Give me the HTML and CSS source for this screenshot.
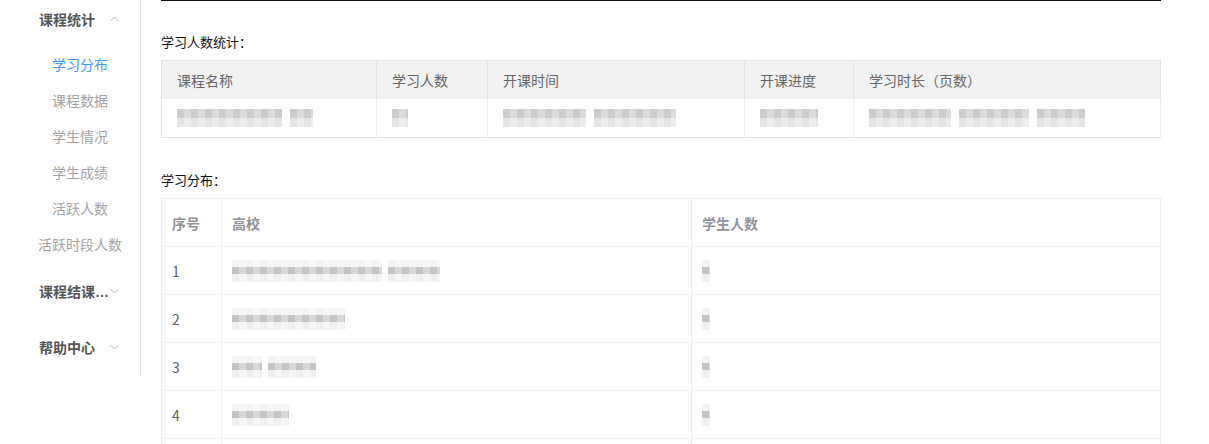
FILE: index.html
```html
<!DOCTYPE html>
<html lang="zh-CN">
<head>
    <meta charset="UTF-8">
    <meta name="viewport" content="width=device-width, initial-scale=1.0">
    <title>课程统计 - 学习分布</title>
    <link rel="stylesheet" href="styles.css">
</head>
<body>

    <div class="page">

        <!-- Menu lateral -->
        <aside class="sidebar">
            <div class="menu-group">
                <div class="menu-title">
                    <span class="title-text">课程统计</span>
                    <svg class="chevron" width="9" height="6" viewBox="0 0 9 6"><path d="M0.5 5 L4.5 1 L8.5 5" fill="none" stroke="#b5b5b5" stroke-width="1"/></svg>
                </div>
                <ul class="submenu">
                    <li class="active">学习分布</li>
                    <li>课程数据</li>
                    <li>学生情况</li>
                    <li>学生成绩</li>
                    <li>活跃人数</li>
                    <li>活跃时段人数</li>
                </ul>
            </div>
            <div class="menu-group">
                <div class="menu-title">
                    <span class="title-text">课程结课统计</span>
                    <svg class="chevron" width="9" height="6" viewBox="0 0 9 6"><path d="M0.5 1 L4.5 5 L8.5 1" fill="none" stroke="#b5b5b5" stroke-width="1"/></svg>
                </div>
            </div>
            <div class="menu-group">
                <div class="menu-title">
                    <span class="title-text">帮助中心</span>
                    <svg class="chevron" width="9" height="6" viewBox="0 0 9 6"><path d="M0.5 1 L4.5 5 L8.5 1" fill="none" stroke="#b5b5b5" stroke-width="1"/></svg>
                </div>
            </div>
        </aside>

        <!-- Conteudo -->
        <main class="content">
            <p class="section-label">学习人数统计：</p>
            <table class="stat-table">
                <thead>
                    <tr>
                        <th class="c-name">课程名称</th>
                        <th class="c-count">学习人数</th>
                        <th class="c-time">开课时间</th>
                        <th class="c-progress">开课进度</th>
                        <th>学习时长（页数）</th>
                    </tr>
                </thead>
                <tbody>
                    <tr>
                        <td><span class="blur" style="width:105px"></span><span class="blur gap" style="width:23px"></span></td>
                        <td><span class="blur" style="width:16px"></span></td>
                        <td><span class="blur" style="width:83px"></span><span class="blur gap" style="width:82px"></span></td>
                        <td><span class="blur" style="width:58px"></span></td>
                        <td><span class="blur" style="width:82px"></span><span class="blur gap" style="width:70px"></span><span class="blur gap" style="width:48px"></span></td>
                    </tr>
                </tbody>
            </table>

            <p class="section-label second">学习分布：</p>
            <table class="dist-table">
                <thead>
                    <tr>
                        <th class="c-index">序号</th>
                        <th class="c-school">高校</th>
                        <th>学生人数</th>
                    </tr>
                </thead>
                <tbody>
                    <tr>
                        <td>1</td>
                        <td><span class="blur-line" style="width:150px"></span><span class="blur-line gap" style="width:52px"></span></td>
                        <td><span class="blur-line" style="width:8px"></span></td>
                    </tr>
                    <tr>
                        <td>2</td>
                        <td><span class="blur-line" style="width:113px"></span></td>
                        <td><span class="blur-line" style="width:8px"></span></td>
                    </tr>
                    <tr>
                        <td>3</td>
                        <td><span class="blur-line" style="width:30px"></span><span class="blur-line gap" style="width:48px"></span></td>
                        <td><span class="blur-line" style="width:8px"></span></td>
                    </tr>
                    <tr>
                        <td>4</td>
                        <td><span class="blur-line" style="width:57px"></span></td>
                        <td><span class="blur-line" style="width:8px"></span></td>
                    </tr>
                    <tr>
                        <td></td>
                        <td></td>
                        <td></td>
                    </tr>
                </tbody>
            </table>
        </main>

    </div>

</body>
</html>
```

FILE: styles.css
```css
body {
    font-family: "Noto Sans CJK SC", "Noto Sans", sans-serif;
    margin: 0;
    padding: 0;
    background-color: #ffffff;
    color: #333;
}

.page {
    display: flex;
    align-items: flex-start;
}

/* Menu lateral */
.sidebar {
    width: 141px;
    height: 384px;
    margin-top: -9px;
    border-right: 1px solid #e6e6e6;
    box-sizing: border-box;
    flex-shrink: 0;
}

.menu-title {
    display: flex;
    align-items: center;
    height: 56px;
    padding-left: 39px;
}

.title-text {
    width: 70px;
    font-family: "Liberation Sans", "Noto Sans CJK SC", sans-serif;
    font-size: 14px;
    font-weight: bold;
    color: #555;
    white-space: nowrap;
    overflow: hidden;
    text-overflow: ellipsis;
}

.chevron {
    margin-left: 1px;
}

.submenu {
    list-style: none;
    margin: 0;
    padding: 0;
}

.submenu li {
    height: 36px;
    line-height: 35px;
    padding-left: 20px;
    text-align: center;
    font-size: 14px;
    color: #a3a3a3;
}

.submenu li.active {
    color: #3d9bf6;
}

/* Conteudo */
.content {
    margin-left: 20px;
    width: 1000px;
    border-top: 1px solid #111;
}

.section-label {
    margin: 32px 0 9px;
    font-size: 13px;
    line-height: 18px;
    color: #111;
}

.section-label.second {
    margin-top: 33px;
}

/* Tabela de estatisticas */
.stat-table {
    width: 100%;
    border-collapse: collapse;
    border: 1px solid #e2e2e2;
    font-size: 14px;
}

.stat-table th {
    height: 38px;
    padding: 0 15px;
    background-color: #f2f2f2;
    border-right: 1px solid #e4e4e4;
    text-align: left;
    font-weight: normal;
    color: #666;
}

.stat-table td {
    height: 38px;
    padding: 0 15px;
    border-right: 1px solid #eeeeee;
    font-size: 0;
}

.stat-table .c-name { width: 184px; }
.stat-table .c-count { width: 80px; }
.stat-table .c-time { width: 226px; }
.stat-table .c-progress { width: 78px; }

/* Mosaico dos dados ocultos */
.blur {
    display: inline-block;
    height: 18px;
    vertical-align: middle;
    background:
        repeating-linear-gradient(90deg, rgba(255, 255, 255, 0) 0 7px, rgba(255, 255, 255, 0.3) 7px 14px),
        linear-gradient(to bottom, #cdcbcb 0 50%, #e6e5e5 50% 100%);
}

.blur.gap {
    margin-left: 8px;
}

.blur-line {
    display: inline-block;
    height: 22px;
    vertical-align: middle;
    background:
        repeating-linear-gradient(90deg, rgba(255, 255, 255, 0) 0 7px, rgba(255, 255, 255, 0.35) 7px 14px),
        linear-gradient(to bottom, #f3f3f3 0 30%, #c4c4c6 30% 65%, #f0f0f0 65% 100%);
}

.blur-line.gap {
    margin-left: 6px;
}

/* Tabela de distribuicao */
.dist-table {
    width: 100%;
    border-collapse: collapse;
    font-size: 14px;
}

.dist-table th,
.dist-table td {
    height: 47px;
    padding: 0 10px;
    border: 1px solid #ebeef5;
    text-align: left;
}

.dist-table th {
    font-weight: bold;
    color: #909399;
}

.dist-table td {
    color: #606266;
}

.dist-table .c-index { width: 39px; }
.dist-table .c-school { width: 449px; }
```
